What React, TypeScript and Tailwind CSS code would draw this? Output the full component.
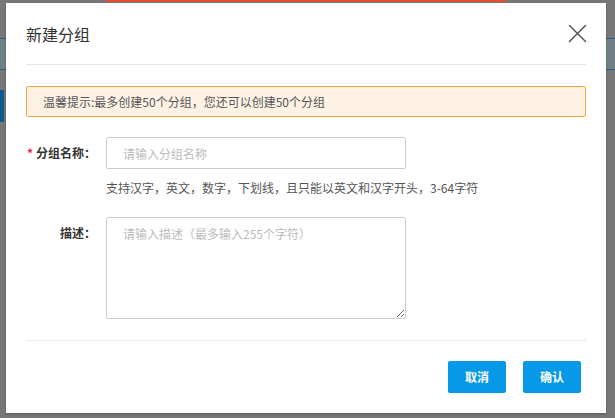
const font = { fontFamily: '"Noto Sans CJK SC", "Liberation Sans", sans-serif' };

const Backdrop = () => (
	<>
		{/* page content behind the overlay */}
		<div className="absolute left-[106px] top-0 h-[2px] w-[400px] bg-[#e2512f]" />
		<div className="absolute left-0 right-0 top-[38px] h-[32px] border-y border-[#23608f] bg-[#6f7f84]" />
		<div className="absolute left-0 top-[90px] h-[32px] w-[4px] bg-[#0f5a8c]" />
	</>
);

const CloseIcon = () => (
	<svg width="19" height="19" viewBox="0 0 19 19" fill="none" stroke="#555" strokeWidth="1.5" strokeLinecap="round">
		<path d="M1.5 1.5L17.5 17.5M17.5 1.5L1.5 17.5" />
	</svg>
);

export default function App() {
	return (
		<div className="relative h-[418px] w-[615px] overflow-hidden bg-[#777777]" style={font}>
			<Backdrop />
			<div className="absolute left-[6px] top-[3px] flex w-[600px] flex-col bg-white pb-5 shadow-[0_1px_2px_rgba(0,0,0,0.25)]">
				<div className="mx-5 flex h-[62px] items-center justify-between border-b border-[#e6e6e6]">
					<h3 className="text-[16px] text-[#333]">新建分组</h3>
					<button type="button" className="mr-[-1px]">
						<CloseIcon />
					</button>
				</div>

				<div className="mx-5 mt-[21px] flex h-[31px] items-center rounded-[2px] border border-[#f6a93a] bg-[#fef2e5] pl-4 text-[12px] text-[#555]">
					温馨提示:最多创建50个分组，您还可以创建50个分组
				</div>

				<div className="mx-5 mt-[20px] flex items-center gap-[10px]">
					<label className="w-[70px] text-right text-[12px] font-bold text-[#333]">
						<span className="mr-[3px] text-[#f5222d]">*</span>分组名称：
					</label>
					<input
						placeholder="请输入分组名称"
						className="h-[32px] w-[300px] rounded-[2px] border border-[#cccccc] pl-4 text-[12px] outline-none placeholder:text-[#bbbbbb]"
					/>
				</div>
				<p className="ml-[100px] mt-[10px] text-[12px] leading-[18px] text-[#555]">
					支持汉字，英文，数字，下划线，且只能以英文和汉字开头，3-64字符
				</p>

				<div className="mx-5 mt-[20px] flex items-start gap-[10px]">
					<label className="w-[70px] pt-[7px] text-right text-[12px] font-bold text-[#333]">描述：</label>
					<textarea
						placeholder="请输入描述（最多输入255个字符）"
						className="h-[102px] w-[300px] rounded-[2px] border border-[#cccccc] px-4 pt-[7px] text-[12px] leading-[18px] outline-none placeholder:text-[#bbbbbb]"
					/>
				</div>

				<div className="mx-5 mt-[21px] border-t border-[#ebebeb]" />

				<div className="mt-[20px] flex justify-end gap-[17px] pr-[25px]">
					<button type="button" className="h-[32px] w-[58px] rounded-[2px] bg-[#0898e8] text-[12px] font-bold text-white">
						取消
					</button>
					<button type="button" className="h-[32px] w-[58px] rounded-[2px] bg-[#0898e8] text-[12px] font-bold text-white">
						确认
					</button>
				</div>
			</div>
		</div>
	);
}
